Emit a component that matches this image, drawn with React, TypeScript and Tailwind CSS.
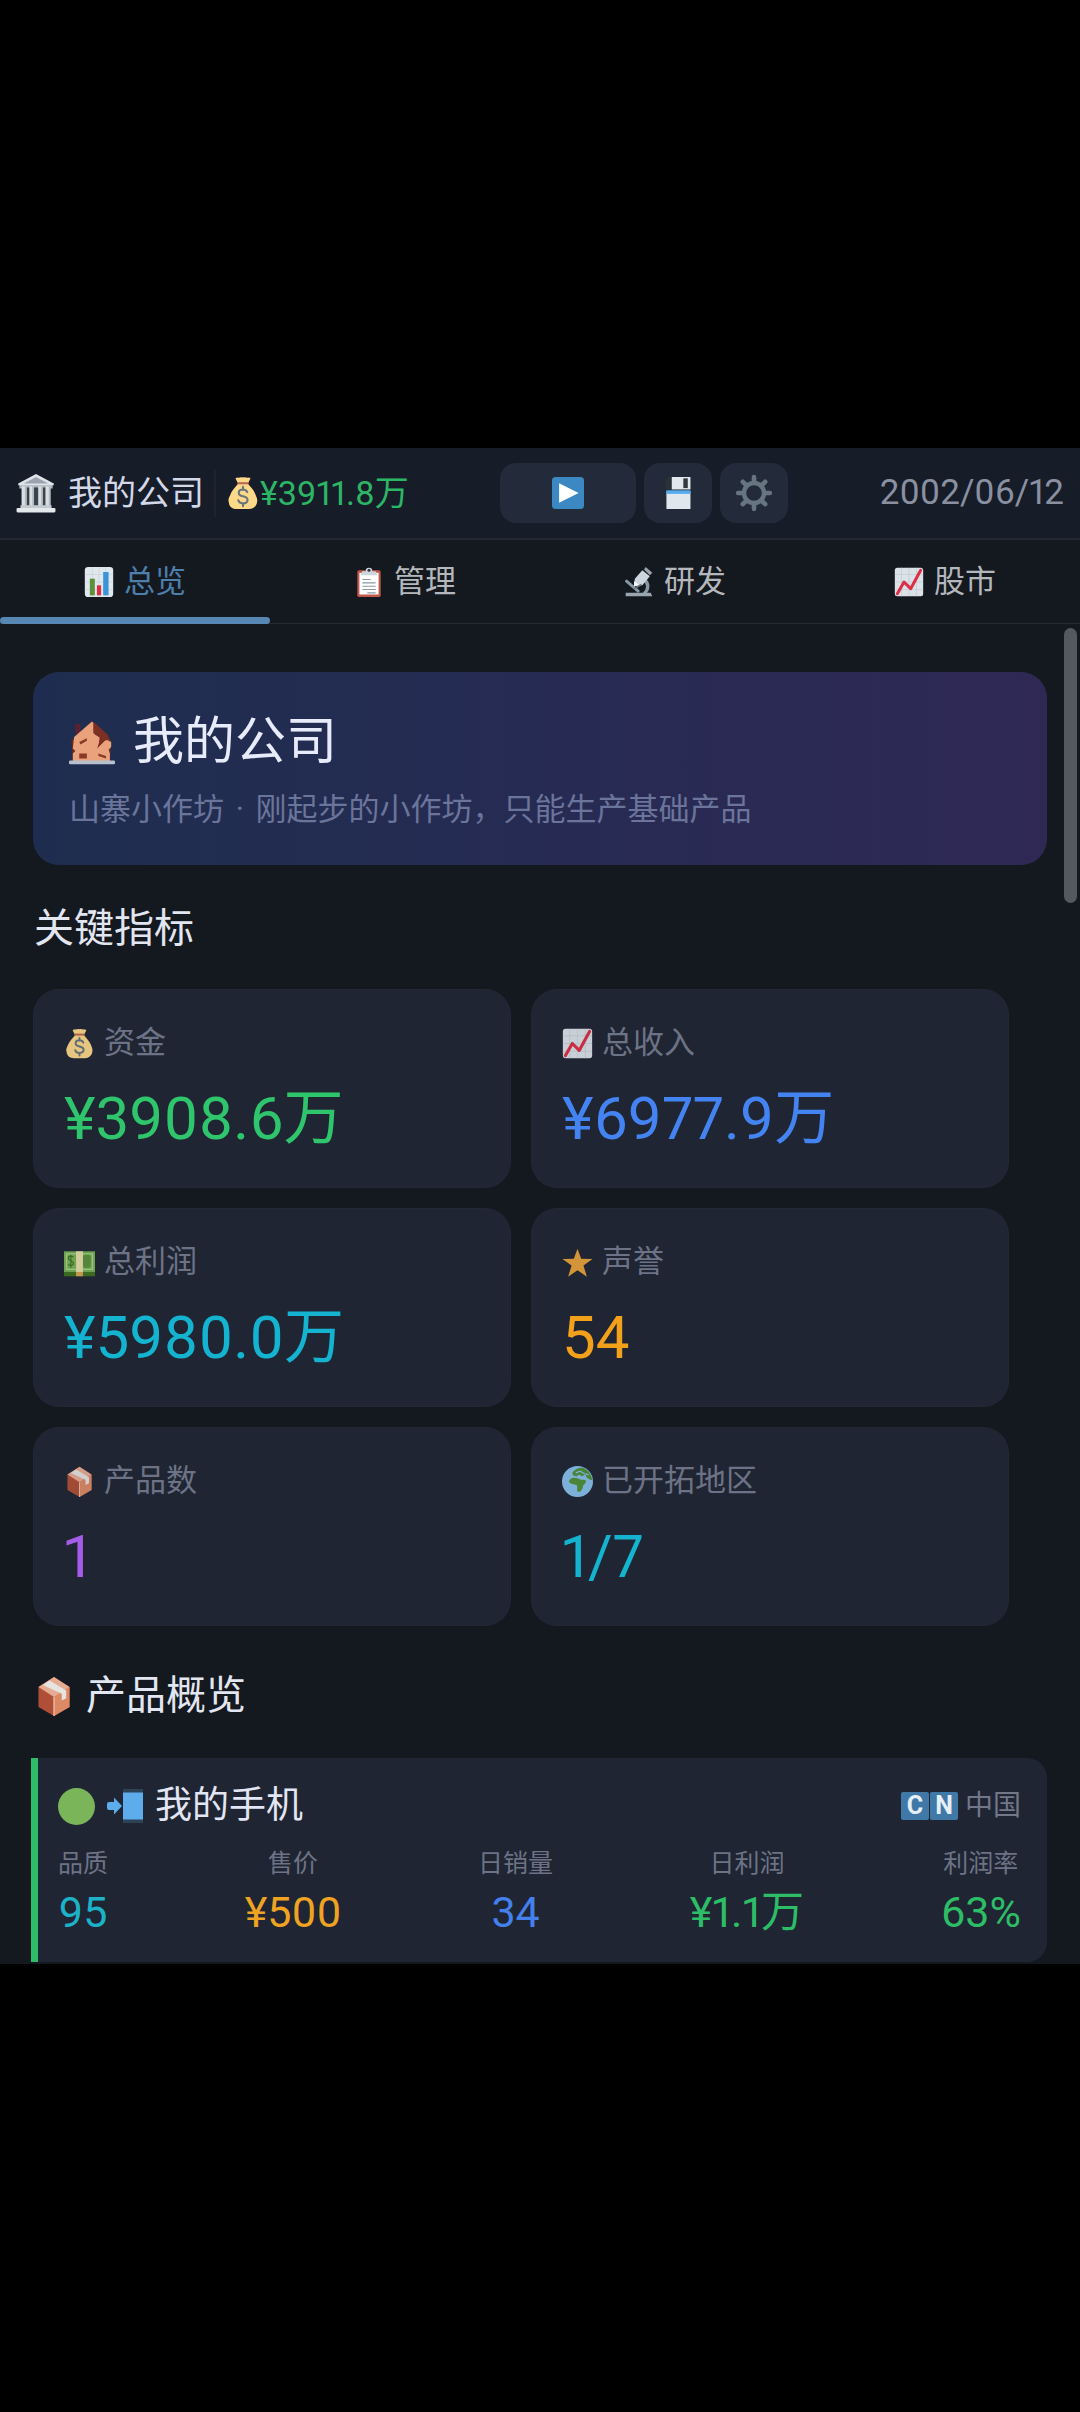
import type { ReactNode } from "react";

type IconProps = { className: string };

function Svg({ className, children, box = "0 0 36 36" }: IconProps & { children: ReactNode; box?: string }) {
  return (
    <svg viewBox={box} className={`shrink-0 ${className}`} aria-hidden="true">
      {children}
    </svg>
  );
}

function BankIcon({ className }: IconProps) {
  return (
    <Svg className={className}>
      <path d="M3 10h30v4H3z" fill="#aab3bb" />
      <path d="M18 1 34 9.500v1.500H2V9.500z" fill="#dfe4e8" />
      <path d="M18 3.500 29 9.500H7z" fill="#9aa4ae" />
      <path d="M6 13h24v18H6z" fill="#39434d" />
      <path d="M5 12h4.500v18H5zM12 12h4v18h-4zM20 12h4v18h-4zM26.500 12H31v18h-4.500z" fill="#d9dee2" />
      <path d="M8 12h1.500v18H8zM14.500 12H16v18h-1.500zM22.500 12H24v18h-1.500zM29.500 12H31v18h-1.500z" fill="#b3bbc3" />
      <path d="M4 29h28v3H4z" fill="#c3cad0" />
      <rect x="0.500" y="31.500" width="35" height="4" rx="1" fill="#e3e8eb" />
    </Svg>
  );
}

function MoneyBagIcon({ className }: IconProps) {
  return (
    <Svg className={className}>
      <path d="M12 1.500c2 .8 3.500-.8 6 0 2.500-.8 4 .8 6 0l2 1-2.500 5h-11L10 2.500z" fill="#fdd888" />
      <path
        d="M13 8c-3 4-6 6-8.500 12-1.500 3-2.500 5-1.500 8 .5 5 4 7 8.500 7h13c4.500 0 8-3 8.500-8 .5-3-1-5-2-8C29 14 26 12 23 8z"
        fill="#fdd888"
      />
      <path d="M12 6.500h12v2.300H12z" fill="#bf6952" />
      <path
        d="M22.500 17c-1-2-2.700-2.700-4.500-2.700-2.600 0-4.500 1.400-4.500 3.600 0 4.800 9.300 2.400 9.300 7.200 0 2.400-2 3.900-4.800 3.900-2.400 0-4.300-1.100-5-3.300M18 11.500v3M18 29v3"
        fill="none"
        stroke="#67757f"
        strokeWidth="2.200"
        strokeLinecap="round"
      />
    </Svg>
  );
}

function PlayIcon({ className }: IconProps) {
  return (
    <Svg className={className}>
      <rect width="36" height="36" rx="4" fill="#3b88c3" />
      <path d="M8 7v22l22-11z" fill="#fff" />
    </Svg>
  );
}

function FloppyIcon({ className }: IconProps) {
  return (
    <Svg className={className}>
      <path d="M7 0h22a3 3 0 0 1 3 3v30a3 3 0 0 1-3 3H7a3 3 0 0 1-3-3V5z" fill="#2a3138" />
      <path d="M11 0h21v14H11z" fill="#e1e8ed" />
      <path d="M24 1.500h5v11h-5z" fill="#31373d" />
      <path d="M5 16h27v20H5z" fill="#e1e8ed" />
      <path d="M5 15h27v4H5z" fill="#55acee" />
    </Svg>
  );
}

function GearIcon({ className }: IconProps) {
  return (
    <Svg className={className}>
      <g stroke="#66757f" fill="none">
        <circle cx="18" cy="18" r="9.500" strokeWidth="4.200" />
        <path
          d="M18 3v4.500M18 28.500V33M3 18h4.500M28.500 18H33M7.400 7.400l3 3M25.600 25.600l3 3M7.400 28.600l3-3M25.600 10.400l3-3"
          strokeWidth="4.400"
          strokeLinecap="round"
        />
      </g>
    </Svg>
  );
}

function BarChartIcon({ className }: IconProps) {
  return (
    <Svg className={className}>
      <rect x="1" width="34" height="36" rx="4" fill="#e1e8ed" />
      <path d="M1 9h34M1 18h34M1 27h34M10 0v36M18 0v36M26 0v36" stroke="#ccd6dd" />
      <path d="M7 14h6v20H7z" fill="#5c913b" />
      <path d="M15.500 22h5v12h-5z" fill="#dd2e44" />
      <path d="M23 6h6.500v28H23z" fill="#3b94d9" />
    </Svg>
  );
}

function ClipboardIcon({ className }: IconProps) {
  return (
    <Svg className={className}>
      <rect x="4" y="4" width="28" height="32" rx="2" fill="#c1594a" />
      <path d="M6.500 7h23v26h-23z" fill="#fff" />
      <path d="M10 15h10M10 19h16M10 23h16M10 27h16M16 31h10" stroke="#8899a6" strokeWidth="1.300" />
      <path d="M10 5h4a4 4 0 0 1 8 0h4l2 5H8z" fill="#ccd6dd" />
      <circle cx="18" cy="4" r="1.800" fill="#31373d" />
    </Svg>
  );
}

function MicroscopeIcon({ className }: IconProps) {
  return (
    <Svg className={className}>
      <path d="M24 15c6 4 6 12 0 17" fill="none" stroke="#8899a6" strokeWidth="4" />
      <path d="m3 17 14 12" stroke="#8899a6" strokeWidth="3.500" strokeLinecap="round" />
      <path d="M2 31h30l2 4H2z" fill="#99a5af" />
      <path d="m22 4 9 7-9 11-10 1 1-9z" fill="#ccd6dd" />
      <path d="m12 17 7 5-7 1z" fill="#f5f8fa" />
      <path d="m24 3 2-3 8 7-3 3z" fill="#99a5af" />
      <path d="m12 26 9-5" stroke="#66757f" strokeWidth="2" />
    </Svg>
  );
}

function TrendIcon({ className }: IconProps) {
  return (
    <Svg className={className}>
      <rect x="1" y="1" width="34" height="34" rx="3" fill="#dbe2e8" />
      <path d="M1 9h34M1 18h34M1 27h34M9 1v34M18 1v34M27 1v34" stroke="#c5d0d8" />
      <path d="M4 32 12 18l8 8L32 4" fill="none" stroke="#dd2e44" strokeWidth="3.600" strokeLinecap="round" strokeLinejoin="round" />
    </Svg>
  );
}

function HouseIcon({ className }: IconProps) {
  return (
    <Svg className={className}>
      <path d="M5 4h4v8H5z" fill="#5d2030" />
      <path d="M2 17 18 2l15 15-1 16H3z" fill="#6e2b1c" />
      <path d="M4 14 18 2l4 4-2 6 5 3-3 8 7-7 4 2v4l-2 2 1 3v8H3v-8l2-2-2-2z" fill="#e9a27c" />
      <path d="M19 2 30 12l2 4-5 1-4 5 1-8-5-3z" fill="#7c3024" />
      <path d="m8 18 6-3v2l-5 3zM8 27h6v4H8zM23 27l6 2v2l-6-2z" fill="#8a3a26" />
      <rect y="32.500" width="36" height="3" rx="1" fill="#b8c0cd" />
    </Svg>
  );
}

function BanknoteIcon({ className }: IconProps) {
  return (
    <Svg className={className}>
      <path d="M0 28h36v6H0z" fill="#3e721d" />
      <path d="M0 5h36v24H0z" fill="#77b255" />
      <path d="M3 8h30v18H3z" fill="none" stroke="#a6d388" strokeWidth="1.500" />
      <rect x="22" y="9" width="9" height="15" rx="3" fill="#5c913b" />
      <path
        d="M11 12c-1-2-6-2-6 1s6 3 6 6-5 3-6 1M8 9v15"
        fill="none"
        stroke="#3e721d"
        strokeWidth="1.300"
      />
      <path d="M14 5h8v24h-8z" fill="#e8ddab" />
      <path d="M14 29h8v5h-8z" fill="#d6a356" />
    </Svg>
  );
}

function StarIcon({ className }: IconProps) {
  return (
    <Svg className={className}>
      <path
        d="m18 2 4.300 11.700 13.200.2-10.600 7.700 4 12.900L18 27l-10.900 7.500 4-12.900L.5 13.900l13.200-.2z"
        fill="#e8a13a"
      />
    </Svg>
  );
}

function PackageIcon({ className }: IconProps) {
  return (
    <Svg className={className}>
      <path d="M18 1 32 10v18L18 36 4 28V10z" fill="#b04f37" />
      <path d="M18 19 32 10v18L18 36z" fill="#dc8a66" />
      <path d="M4 10 18 1l14 9-14 9z" fill="#e6ab93" />
      <path d="m8 8 6-4 15 9v7l-4 2v-6z" fill="#e6e3e1" />
      <path d="M18 19v17" stroke="#f0bda5" strokeWidth="1.200" />
    </Svg>
  );
}

function GlobeIcon({ className }: IconProps) {
  return (
    <Svg className={className}>
      <circle cx="18" cy="18" r="18" fill="#88c0ec" />
      <path
        d="M8 18c1-3 4-5 8-4 3 0 4 2 7 2 2 0 5 0 5 2-1 3-4 4-4 7 0 2-3 6-5 5-3-1 0-5-2-8-3-1-8-1-9-4zM12 8c3-5 11-8 16-4 4 3 7 8 7 12-3 1-4-2-6-2l-2-4-4 2-3-2-3 2-4-1z"
        fill="#4f8f38"
      />
      <path d="m16 8 5-2 5 3 5 1" fill="none" stroke="#88c0ec" strokeWidth="1.400" />
    </Svg>
  );
}

function PhoneArrowIcon({ className }: IconProps) {
  return (
    <Svg className={className}>
      <path d="M16 1h20v34H16z" fill="#2b4257" />
      <path d="M16 4.500h20v27H16z" fill="#5dadec" />
      <path d="M2 14h5v-4.500l8 8.500-8 8.500V22H2a2 2 0 0 1-2-2v-4a2 2 0 0 1 2-2z" fill="#5dadec" />
    </Svg>
  );
}

function LetterBadge({ children }: { children: string }) {
  return (
    <span className="flex size-7 items-center justify-center rounded-xs bg-[#4079a8] text-[25px] leading-7 font-bold text-[#e6eef6]">
      {children}
    </span>
  );
}

const tabs = [
  { label: "总览", Icon: BarChartIcon, active: true },
  { label: "管理", Icon: ClipboardIcon, active: false },
  { label: "研发", Icon: MicroscopeIcon, active: false },
  { label: "股市", Icon: TrendIcon, active: false },
];

const metrics = [
  { label: "资金", value: "¥3908.6万", color: "text-[#2fc56c]", Icon: MoneyBagIcon },
  { label: "总收入", value: "¥6977.9万", color: "text-[#4384f2]", Icon: TrendIcon },
  { label: "总利润", value: "¥5980.0万", color: "text-[#14b4d0]", Icon: BanknoteIcon },
  { label: "声誉", value: "54", color: "text-[#f3a11b]", Icon: StarIcon },
  { label: "产品数", value: "1", color: "text-[#a45de8]", Icon: PackageIcon },
  { label: "已开拓地区", value: "1/7", color: "text-[#14b4d0]", Icon: GlobeIcon },
];

const productStats = [
  { label: "品质", value: "95", color: "text-[#1cb2c8]" },
  { label: "售价", value: "¥500", color: "text-[#f0a323]" },
  { label: "日销量", value: "34", color: "text-[#4380ec]" },
  { label: "日利润", value: "¥1.1万", color: "text-[#2dbd67]" },
  { label: "利润率", value: "63%", color: "text-[#2dbd67]" },
];

function TopBar() {
  return (
    <header className="flex h-[92px] items-center justify-between border-b-2 border-[#232934] bg-[#161c28] px-4">
      <div className="flex items-center text-[34px] leading-[48px]">
        <BankIcon className="size-10" />
        <span className="ml-3 text-[#d3d8e8]">我的公司</span>
        <span className="mx-2.5 h-12 w-0.5 bg-[#1d2431]" />
        <MoneyBagIcon className="size-[34px]" />
        <span className="text-[#2db566]">¥3911.8万</span>
      </div>
      <div className="flex gap-2">
        <button aria-label="继续" className="flex h-[60px] w-[136px] items-center justify-center rounded-2xl bg-[#232b3a]">
          <PlayIcon className="size-8" />
        </button>
        <button aria-label="保存" className="flex h-[60px] w-[68px] items-center justify-center rounded-2xl bg-[#232b3a]">
          <FloppyIcon className="size-8" />
        </button>
        <button aria-label="设置" className="flex h-[60px] w-[68px] items-center justify-center rounded-2xl bg-[#232b3a]">
          <GearIcon className="size-[38px]" />
        </button>
      </div>
      <time className="text-[35px] leading-[48px] text-[#8a90a1]" dateTime="2002-06-12">
        2002/06/12
      </time>
    </header>
  );
}

function TabBar() {
  return (
    <nav className="grid h-[84px] grid-cols-4 border-b border-[#262b34]">
      {tabs.map(({ label, Icon, active }) => (
        <button
          key={label}
          className={`relative flex items-center justify-center gap-2.5 text-[31px] leading-10 ${
            active ? "text-[#4e7fac]" : "text-[#b4b7bb]"
          }`}
        >
          <Icon className="size-[30px]" />
          {label}
          {active && <span className="absolute inset-x-0 -bottom-px h-[7px] rounded-sm bg-[#5787b3]" />}
        </button>
      ))}
    </nav>
  );
}

export default function App() {
  return (
    <div className="flex min-h-screen flex-col justify-center bg-black font-[Roboto,'Noto_Sans_CJK_SC',sans-serif] proportional-nums">
      <div className="bg-[#14181f]">
        <TopBar />
        <TabBar />
        <main className="relative px-[33px] pt-12 pb-0.5">
          <div className="absolute top-1 right-[3px] h-[275px] w-[13px] rounded-full bg-[#55595f]" />

          <section className="rounded-[26px] bg-linear-to-r from-[#1e2d4f] via-[#262b53] to-[#2f2855] px-9 pt-10 pb-[35px]">
            <h1 className="flex items-center gap-[18px] text-[51px] leading-[60px] text-[#e8ecfa]">
              <HouseIcon className="size-[46px]" />
              我的公司
            </h1>
            <p className="mt-[18px] text-[31px] leading-10 text-[#6b749a]">
              山寨小作坊 <span className="mx-1">·</span> 刚起步的小作坊，只能生产基础产品
            </p>
          </section>

          <h2 className="mt-10 pl-px text-[40px] leading-[48px] text-[#e2e6f0]">关键指标</h2>
          <section className="mt-9 mr-[38px] grid grid-cols-2 gap-5">
            {metrics.map(({ label, value, color, Icon }) => (
              <div key={label} className="rounded-[26px] border border-[#222836] bg-[#1f2532] px-[30px] pt-[33px] pb-9">
                <div className="flex items-center gap-[9px] text-[31px] leading-10 text-[#6d7386]">
                  <Icon className="size-[31px] opacity-90" />
                  {label}
                </div>
                <div className={`mt-6 text-[60px] leading-[64px] ${color}`}>{value}</div>
              </div>
            ))}
          </section>

          <h2 className="mt-[46px] flex items-center gap-3 pl-px text-[40px] leading-[48px] text-[#e2e6f0]">
            <PackageIcon className="size-10" />
            产品概览
          </h2>
          <article className="mt-[38px] -ml-0.5 rounded-r-[20px] border-l-[7px] border-[#2dbd67] bg-[#1f2532] pt-6 pr-[26px] pb-[26px] pl-5">
            <div className="flex items-center justify-between">
              <h3 className="flex items-center text-[37px] leading-[48px] text-[#e2e6f4]">
                <span className="mr-3 size-[37px] rounded-full bg-[#7ab55a]" />
                <PhoneArrowIcon className="mr-3 size-[36px]" />
                我的手机
              </h3>
              <div className="flex items-center gap-px text-[28px] leading-10 text-[#72788a]">
                <LetterBadge>C</LetterBadge>
                <LetterBadge>N</LetterBadge>
                <span className="ml-1.5">中国</span>
              </div>
            </div>
            <dl className="mt-[18px] flex justify-between text-center">
              {productStats.map(({ label, value, color }) => (
                <div key={label}>
                  <dt className="text-[25px] leading-8 text-[#6d7386]">{label}</dt>
                  <dd className={`mt-2 text-[43px] leading-[48px] ${color}`}>{value}</dd>
                </div>
              ))}
            </dl>
          </article>
        </main>
      </div>
    </div>
  );
}
